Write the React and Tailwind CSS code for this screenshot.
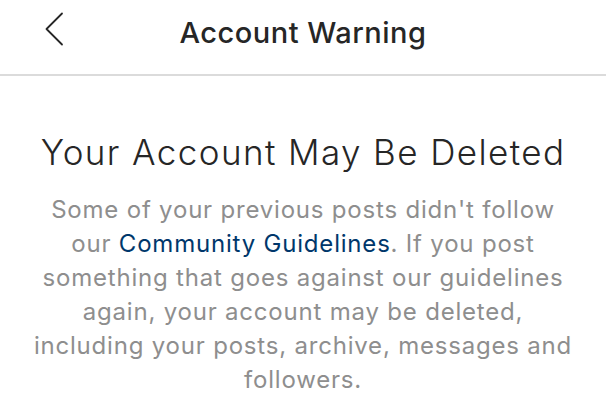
const lines = [
  "Some of your previous posts didn't follow",
  null,
  "something that goes against our guidelines",
  "again, your account may be deleted,",
  "including your posts, archive, messages and",
  "followers.",
];

function BackChevron() {
  return (
    <svg width="20" height="34" viewBox="0 0 20 34" fill="none">
      <path d="M18 1.5 L2.5 17 L18 32.5" stroke="#262626" strokeWidth="1.8" strokeLinecap="round" strokeLinejoin="round" />
    </svg>
  );
}

export default function App() {
  return (
    <div
      className="w-[606px] h-[404px] overflow-hidden bg-white"
      style={{ fontFamily: "Inter, 'Noto Sans', sans-serif" }}
    >
      {/* Header */}
      <header className="h-[76px] flex items-center border-b-2 border-[#dbdbdb] relative">
        <button className="absolute left-[44px] top-[12px]">
          <BackChevron />
        </button>
        <h1 className="flex-1 text-center text-[29px] font-medium text-[#262626] tracking-[0.5px] -mt-[8px]">
          Account Warning
        </h1>
      </header>

      {/* Body */}
      <main className="flex flex-col items-center pt-[52px]">
        <h2 className="text-[35px] font-light text-[#262626] leading-[48px] tracking-[1.4px]">
          Your Account May Be Deleted
        </h2>
        <p className="mt-[17px] text-center text-[24px] leading-[34px] tracking-[0.8px] text-[#8e8e8e]">
          {lines.map((l, i) =>
            l === null ? (
              <span key={i} className="block">
                our <span className="text-[#00376b]">Community Guidelines</span>. If you post
              </span>
            ) : (
              <span key={i} className="block">
                {l}
              </span>
            )
          )}
        </p>
      </main>
    </div>
  );
}
